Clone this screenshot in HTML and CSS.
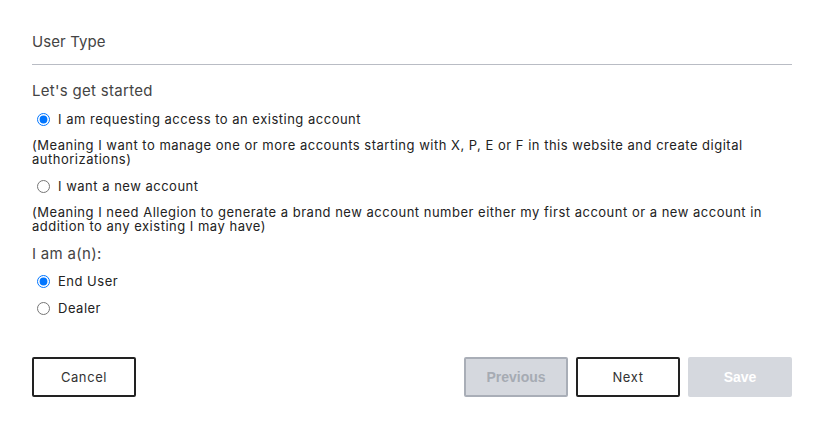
FILE: index.html
```html
<!DOCTYPE html>
<html>
<head>
<meta charset="utf-8">
<link rel="stylesheet" href="styles.css">
</head>
<body>
<div class="page">
  <div class="title">User Type</div>
  <div class="section-label">Let's get started</div>
  <label class="radio-row"><input type="radio" name="acc" checked> <span>I am requesting access to an existing account</span></label>
  <p class="desc">(Meaning I want to manage one or more accounts starting with X, P, E or F in this website and create digital authorizations)</p>
  <label class="radio-row"><input type="radio" name="acc"> <span>I want a new account</span></label>
  <p class="desc">(Meaning I need Allegion to generate a brand new account number either my first account or a new account in addition to any existing I may have)</p>
  <div class="section-label second">I am a(n):</div>
  <label class="radio-row tight"><input type="radio" name="role" checked> <span>End User</span></label>
  <label class="radio-row tight"><input type="radio" name="role"> <span>Dealer</span></label>
  <div class="actions">
    <button class="btn outline">Cancel</button>
    <div class="right">
      <button class="btn disabled-outline">Previous</button>
      <button class="btn outline">Next</button>
      <button class="btn disabled-fill">Save</button>
    </div>
  </div>
</div>
</body>
</html>
```
FILE: styles.css
```css
body {
  margin: 0;
  font-family: Inter, "Open Sans", sans-serif;
  color: #333;
  background: #fff;
}
.page {
  padding: 0 32px;
}
.title {
  font-size: 15px;
  color: #444;
  padding-top: 32px;
  padding-bottom: 12px;
  line-height: 20px;
  border-bottom: 1px solid #b9bcc4;
  letter-spacing: 0.1px;
}
.section-label {
  font-size: 15px;
  color: #444;
  line-height: 20px;
  margin-top: 16px;
  margin-bottom: 9px;
  letter-spacing: 0.3px;
}
.section-label.second {
  margin-top: 11px;
  margin-bottom: 8px;
}
.radio-row {
  display: flex;
  align-items: center;
  font-size: 13px;
  line-height: 18px;
  height: 18px;
  color: #222;
  margin-bottom: 10px;
  letter-spacing: 0.5px;
}
.radio-row.tight {
  margin-bottom: 9px;
}
.radio-row input {
  margin: 0 8px 0 5px;
  width: 13px;
  height: 13px;
}
.desc {
  font-size: 13px;
  line-height: 14px;
  color: #222;
  margin: 0 0 11px 0;
  letter-spacing: 0.5px;
}
.actions {
  display: flex;
  justify-content: space-between;
  margin-top: 40px;
}
.right {
  display: flex;
  gap: 8px;
}
.btn {
  width: 104px;
  height: 40px;
  font-size: 13px;
  border-radius: 2px;
  font-family: Inter, sans-serif;
  cursor: pointer;
  box-sizing: border-box;
  letter-spacing: 0.6px;
}
.btn.outline {
  background: #fff;
  border: 2px solid #222;
  color: #333;
}
.btn.disabled-outline {
  background: #d5d8de;
  border: 2px solid #a9aeb7;
  color: #a6abb3;
  font-family: "Liberation Sans", Arial, sans-serif;
  font-weight: bold;
  font-size: 14px;
  letter-spacing: 0;
}
.btn.disabled-fill {
  background: #d5d8de;
  border: none;
  color: #fff;
  font-family: "Liberation Sans", Arial, sans-serif;
  font-weight: bold;
  font-size: 14px;
  letter-spacing: 0;
}
```
